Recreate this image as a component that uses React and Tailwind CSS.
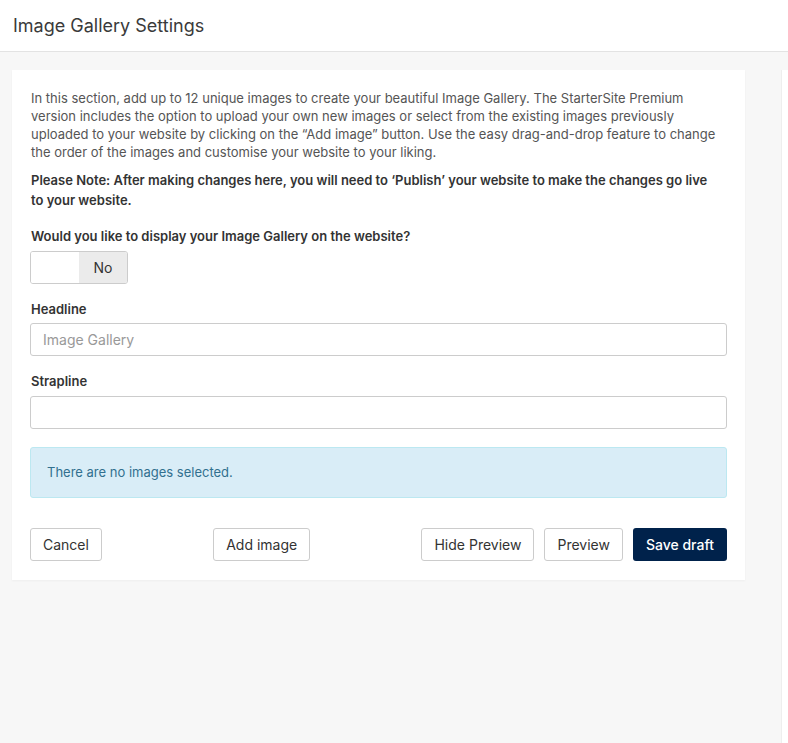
import React from 'react';

export default function App() {
  return (
    <div className="min-h-[743px] bg-[#f7f7f7] text-[13px] text-[#555]" style={{ fontFamily: 'Inter, "Liberation Sans", sans-serif' }}>
      {/* Header */}
      <div className="h-[52px] bg-white border-b border-[#e3e3e3] flex items-center px-[13px]">
        <h1 className="text-[18px] text-[#3a3a3a] font-normal">Image Gallery Settings</h1>
      </div>

      <div className="flex items-start pl-[12px] pt-[18px]">
        {/* Card */}
        <div className="w-[733px] shrink-0 bg-white shadow-[0_1px_2px_rgba(0,0,0,0.04)] px-[18px] pt-[19px] pb-[19px]">
          <p className="leading-[18px] pl-[1px]">
            In this section, add up to 12 unique images to create your beautiful Image Gallery. The StarterSite Premium
            version includes the option to upload your own new images or select from the existing images previously
            uploaded to your website by clicking on the “Add image” button. Use the easy drag-and-drop feature to change
            the order of the images and customise your website to your liking.
          </p>
          <p className="mt-[9px] leading-[20px] font-semibold text-[#333] pl-[1px] pr-[14px]">
            Please Note: After making changes here, you will need to ‘Publish’ your website to make the changes go live
            to your website.
          </p>

          <div className="mt-[17px]">
            <div className="font-semibold text-[#333] leading-[18px] pl-[1px]">Would you like to display your Image Gallery on the website?</div>
            <div className="mt-[6px] w-[98px] h-[33px] border border-[#ccc] rounded-[3px] flex overflow-hidden">
              <div className="w-[48px] bg-white" />
              <div className="flex-1 bg-[#ebebeb] flex items-center justify-center text-[14px] text-[#333]">No</div>
            </div>
          </div>

          <div className="mt-[16px]">
            <div className="font-semibold text-[#333] leading-[18px] pl-[1px]">Headline</div>
            <input
              className="mt-[5px] w-full h-[33px] border border-[#ccc] rounded-[3px] px-[12px] text-[14px] text-[#333] placeholder:text-[#999] outline-none"
              placeholder="Image Gallery"
            />
          </div>

          <div className="mt-[16px]">
            <div className="font-semibold text-[#333] leading-[18px] pl-[1px]">Strapline</div>
            <input className="mt-[6px] w-full h-[33px] border border-[#ccc] rounded-[3px] px-[12px] text-[14px] text-[#333] outline-none" />
          </div>

          <div className="mt-[18px] h-[51px] bg-[#d9edf7] border border-[#bce8f1] rounded-[3px] flex items-center px-[16px] text-[#31708f]">
            There are no images selected.
          </div>

          <div className="mt-[30px] flex justify-between items-center text-[14px] text-[#333]">
            <button className="h-[33px] px-[12px] border border-[#ccc] rounded-[3px] bg-white">Cancel</button>
            <button className="h-[33px] px-[12px] border border-[#ccc] rounded-[3px] bg-white">Add image</button>
            <div className="flex gap-[10px]">
              <button className="h-[33px] px-[12px] border border-[#ccc] rounded-[3px] bg-white">Hide Preview</button>
              <button className="h-[33px] px-[12px] border border-[#ccc] rounded-[3px] bg-white">Preview</button>
              <button className="h-[33px] px-[13px] rounded-[3px] bg-[#00224b] text-white font-medium">Save draft</button>
            </div>
          </div>
        </div>

        {/* Preview panel (cut off) */}
        <div className="ml-[36px] flex-1 min-h-[673px] bg-white border-l border-[#eee]" />
      </div>
    </div>
  );
}
